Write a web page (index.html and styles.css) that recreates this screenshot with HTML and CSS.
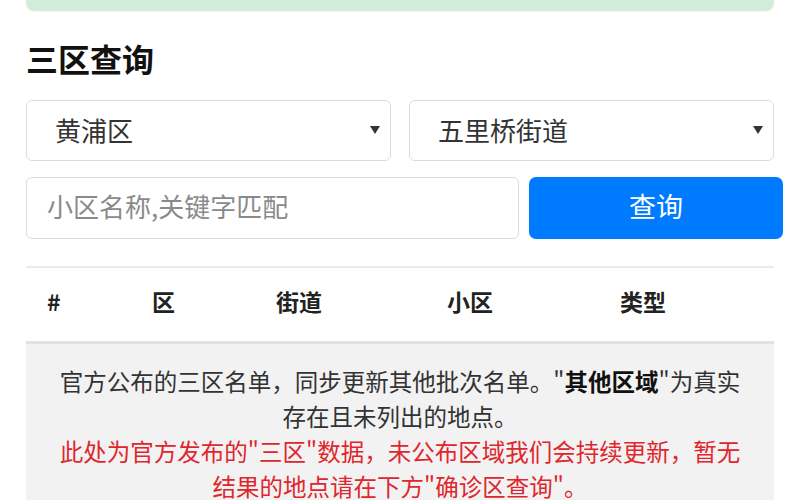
FILE: index.html
```html
<!DOCTYPE html>
<html lang="zh-CN">
<head>
<meta charset="utf-8">
<title>三区查询</title>
<link rel="stylesheet" href="styles.css">
</head>
<body>
<div class="page">
  <div class="alert-success"></div>
  <h2 class="title">三区查询</h2>
  <div class="row selects">
    <div class="select-box"><span>黄浦区</span><span class="arrow"></span></div>
    <div class="select-box"><span>五里桥街道</span><span class="arrow"></span></div>
  </div>
  <div class="row search">
    <input class="search-input" type="text" placeholder="小区名称,关键字匹配">
    <button class="search-btn">查询</button>
  </div>
  <table class="result">
    <colgroup>
      <col class="c1"><col class="c2"><col class="c3"><col class="c4"><col class="c5">
    </colgroup>
    <thead>
      <tr><th>#</th><th>区</th><th>街道</th><th>小区</th><th>类型</th></tr>
    </thead>
    <tbody>
      <tr>
        <td colspan="5" class="note">
          官方公布的三区名单，同步更新其他批次名单。"<b>其他区域</b>"为真实存在且未列出的地点。<br>
          <span class="red">此处为官方发布的"三区"数据，未公布区域我们会持续更新，暂无结果的地点请在下方"确诊区查询"。</span>
        </td>
      </tr>
    </tbody>
  </table>
</div>
</body>
</html>
```

FILE: styles.css
```css
html, body {
  margin: 0;
  padding: 0;
  background: #ffffff;
}
body {
  font-family: "Noto Sans CJK SC", "Noto Sans", sans-serif;
  color: #212529;
}
.page {
  padding: 0 26px;
  overflow: hidden;
  height: 500px;
}
.alert-success {
  height: 11px;
  background: #d4edda;
  border-radius: 0 0 8px 8px;
  box-shadow: 0 1px 1px rgba(0,0,0,0.04);
}
.title {
  margin: 28px 0 0;
  font-size: 32px;
  line-height: 38px;
  font-weight: 700;
  color: #111;
}
.row {
  display: flex;
}
.selects {
  margin-top: 23px;
  gap: 18px;
}
.select-box {
  flex: 1;
  height: 61px;
  box-sizing: border-box;
  border: 1px solid #dcdcdc;
  border-radius: 6px;
  display: flex;
  align-items: center;
  justify-content: space-between;
  padding: 0 10px 3px 28px;
  font-size: 26px;
  color: #333;
}
.arrow {
  width: 0;
  height: 0;
  border-left: 5px solid transparent;
  border-right: 5px solid transparent;
  border-top: 8px solid #333;
  margin-top: 2px;
}
.search {
  margin-top: 16px;
  gap: 10px;
  margin-right: -9px;
}
.search-input {
  width: 493px;
  height: 62px;
  box-sizing: border-box;
  border: 1px solid #dcdcdc;
  border-radius: 6px;
  padding: 0 20px 5px;
  font-family: inherit;
  font-size: 26px;
  color: #333;
  outline: none;
}
.search-input::placeholder {
  color: #8a8a8a;
}
.search-btn {
  flex: 1;
  height: 62px;
  border: none;
  border-radius: 7px;
  background: #007bff;
  color: #fff;
  font-family: inherit;
  font-size: 27px;
  padding: 0 0 6px;
}
.result {
  width: 100%;
  margin-top: 27px;
  border-collapse: collapse;
  table-layout: fixed;
}
.c1 { width: 105px; }
.c2 { width: 124px; }
.c3 { width: 171px; }
.c4 { width: 173px; }
.c5 { width: 175px; }
.result th {
  border-top: 2px solid #ececec;
  border-bottom: 3px solid #e2e2e2;
  height: 65px;
  padding: 0 0 8px 21px;
  text-align: left;
  font-size: 23px;
  font-weight: 700;
  color: #222;
}
.note {
  background: #f2f2f2;
  text-align: center;
  font-size: 23.5px;
  line-height: 35px;
  padding: 20px 32px;
  color: #333;
}
.note b {
  color: #111;
}
.red {
  color: #e0262d;
}
```
